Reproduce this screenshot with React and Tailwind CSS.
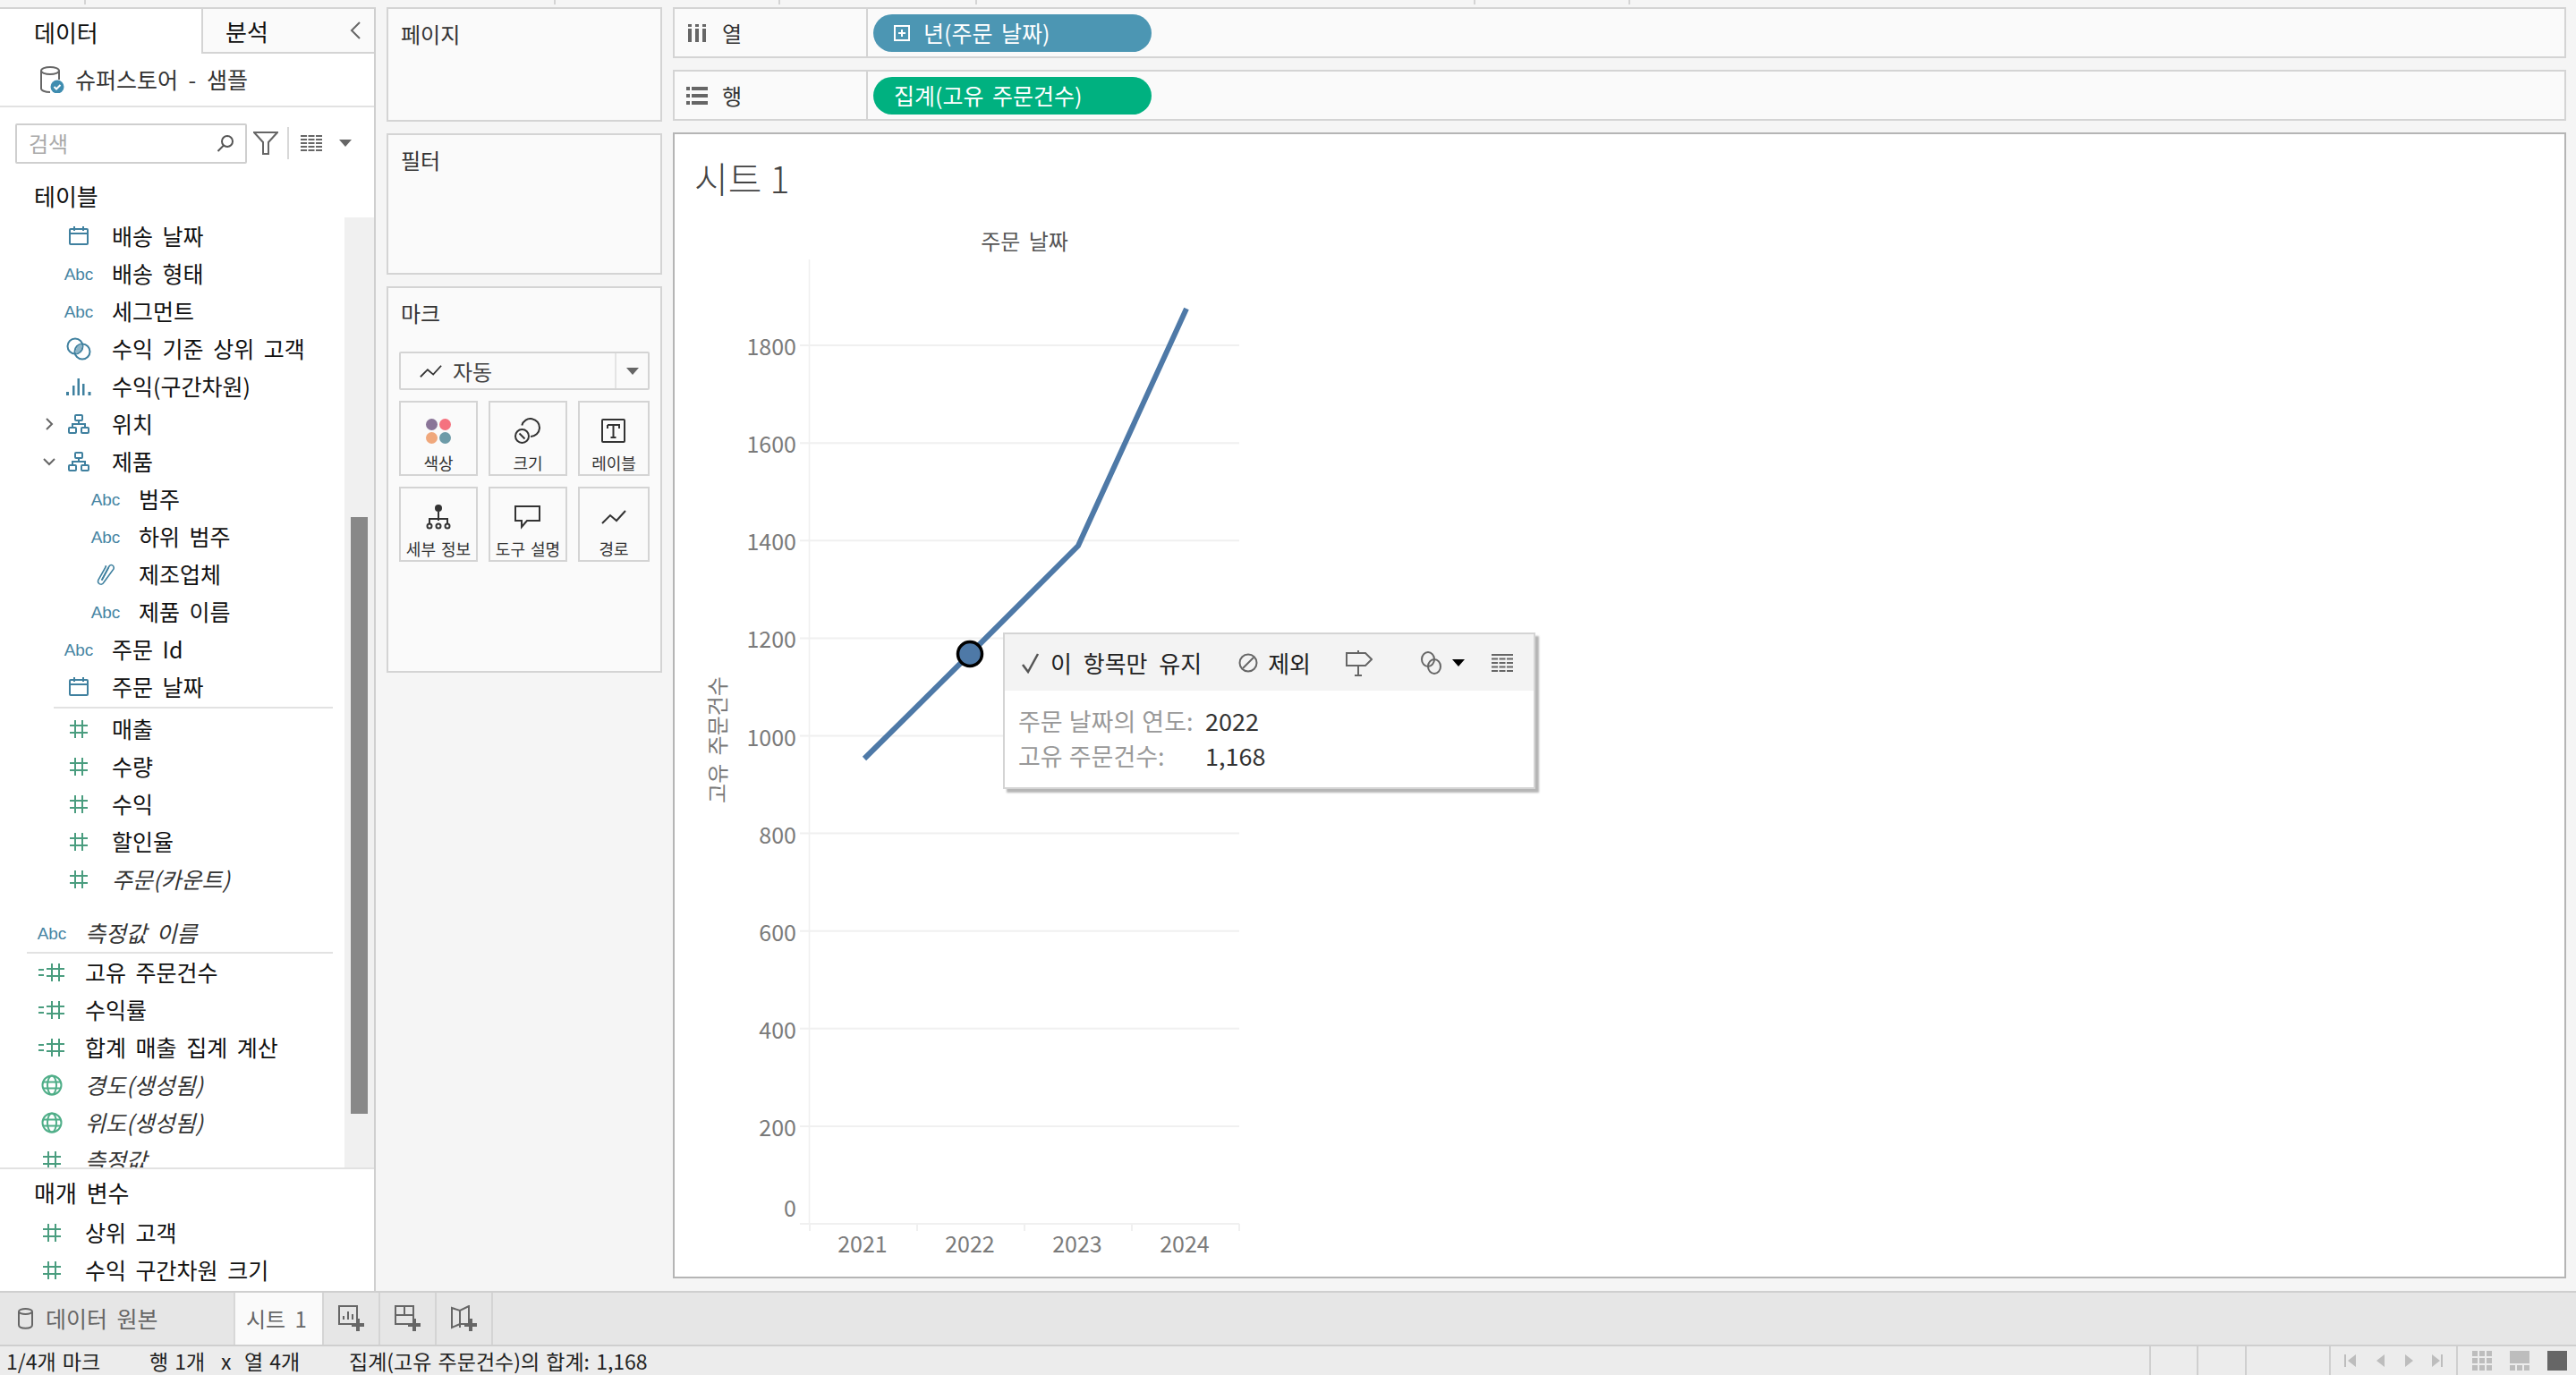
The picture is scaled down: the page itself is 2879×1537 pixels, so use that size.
import React from 'react';

const KR = 'font-["Noto_Sans_CJK_KR","Liberation_Sans",sans-serif]';
const TEAL = '#3f809f';
const GREEN = '#4a9d7f';

const Calendar = () => (
  <svg width="24" height="22" viewBox="0 0 24 22" fill="none" stroke={TEAL} strokeWidth="2">
    <rect x="2" y="3" width="20" height="17" rx="1" />
    <path d="M2 8h20M7 0v5M17 0v5" />
  </svg>
);

const Abc = () => <span className='font-["Liberation_Sans",sans-serif] text-[19px] text-[#4785a3] leading-none'>Abc</span>;

const Rings = () => (
  <svg width="28" height="26" viewBox="0 0 28 26" fill="none" stroke={TEAL} strokeWidth="2">
    <circle cx="10" cy="10" r="8.5" />
    <circle cx="18" cy="16" r="8.5" />
    <path d="M11 18.5a8.5 8.5 0 0 1 6-11a8.5 8.5 0 0 1-6 11z" fill="#8fb6c8" stroke="none" />
  </svg>
);

const Bins = () => (
  <svg width="28" height="20" viewBox="0 0 28 20" fill={TEAL}>
    <rect x="0" y="16" width="3" height="4" />
    <rect x="7" y="9" width="2.5" height="11" />
    <rect x="12.5" y="1" width="2.5" height="19" />
    <rect x="18" y="7" width="2.5" height="13" />
    <rect x="24.5" y="16" width="3" height="4" />
  </svg>
);

const Hierarchy = () => (
  <svg width="24" height="22" viewBox="0 0 24 22" fill="none" stroke={TEAL} strokeWidth="2">
    <rect x="8" y="1" width="8" height="6" rx="1" />
    <rect x="1" y="15" width="8" height="6" rx="1" />
    <rect x="15" y="15" width="8" height="6" rx="1" />
    <path d="M12 7v4M5 15v-4h14v4" />
  </svg>
);

const Clip = () => (
  <svg width="22" height="26" viewBox="0 0 22 26" fill="none" stroke={TEAL} strokeWidth="1.6" strokeLinecap="round">
    <path d="M7 19L15 4c2-3 6-1 5 3L9 22c-2 4-8 2-6-3L11 5c1-2 0-1 0-1M7 19" />
    <path d="M7 19l7-13" />
  </svg>
);

const Hash = ({ calc }) => (
  <svg width={calc ? 30 : 22} height="22" viewBox={calc ? '-8 0 30 22' : '0 0 22 22'} fill="none" stroke={GREEN} strokeWidth="2">
    <path d="M7 1v20M15 1v20M1 7h20M1 15h20" />
    {calc && <path d="M-8 8h6M-8 14h6" />}
  </svg>
);

const Globe = () => (
  <svg width="24" height="24" viewBox="0 0 24 24" fill="none" stroke="#4fae88" strokeWidth="2">
    <circle cx="12" cy="12" r="10.5" />
    <ellipse cx="12" cy="12" rx="5" ry="10.5" />
    <path d="M2 8.500h20M2 15.500h20" />
  </svg>
);

const Caret = ({ className = '', color = '#666' }) => (
  <svg width="14" height="8" viewBox="0 0 14 8" className={className}>
    <path d="M0 0h14L7 8z" fill={color} />
  </svg>
);

const ICONS = {
  cal: <Calendar />,
  abc: <Abc />,
  rings: <Rings />,
  bins: <Bins />,
  tree: <Hierarchy />,
  clip: <Clip />,
  hash: <Hash />,
  calc: <Hash calc />,
  globe: <Globe />,
};

const Row = ({ depth = 1, icon, label, italic, chevron }) => {
  const pad = depth === 0 ? 'pl-[38px]' : depth === 1 ? 'pl-[68px]' : 'pl-[98px]';
  return (
    <div className={`flex items-center h-[42px] shrink-0 ${pad}`}>
      {chevron && (
        <div className="w-[26px] -ml-[26px] flex justify-center">
          <svg width="14" height="14" viewBox="0 0 14 14" fill="none" stroke="#666" strokeWidth="2">
            {chevron === 'right' ? <path d="M4 1l6 6-6 6" /> : <path d="M1 4l6 6 6-6" />}
          </svg>
        </div>
      )}
      <div className="w-[40px] flex justify-center items-center">{ICONS[icon]}</div>
      <span className={`ml-[17px] text-[25px] text-[#111] whitespace-nowrap [word-spacing:5px] ${italic ? 'italic text-[#333]' : ''}`}>{label}</span>
    </div>
  );
};

const tableRows = [
  { icon: 'cal', label: '배송 날짜' },
  { icon: 'abc', label: '배송 형태' },
  { icon: 'abc', label: '세그먼트' },
  { icon: 'rings', label: '수익 기준 상위 고객' },
  { icon: 'bins', label: '수익(구간차원)' },
  { icon: 'tree', label: '위치', chevron: 'right' },
  { icon: 'tree', label: '제품', chevron: 'down' },
  { depth: 2, icon: 'abc', label: '범주' },
  { depth: 2, icon: 'abc', label: '하위 범주' },
  { depth: 2, icon: 'clip', label: '제조업체' },
  { depth: 2, icon: 'abc', label: '제품 이름' },
  { icon: 'abc', label: '주문 Id' },
  { icon: 'cal', label: '주문 날짜' },
];

const measureRows = [
  { icon: 'hash', label: '매출' },
  { icon: 'hash', label: '수량' },
  { icon: 'hash', label: '수익' },
  { icon: 'hash', label: '할인율' },
  { icon: 'hash', label: '주문(카운트)', italic: true },
];

const extraRows = [
  { depth: 0, icon: 'calc', label: '고유 주문건수' },
  { depth: 0, icon: 'calc', label: '수익률' },
  { depth: 0, icon: 'calc', label: '합계 매출 집계 계산' },
  { depth: 0, icon: 'globe', label: '경도(생성됨)', italic: true },
  { depth: 0, icon: 'globe', label: '위도(생성됨)', italic: true },
  { depth: 0, icon: 'hash', label: '측정값', italic: true },
];

const Sidebar = () => (
  <div className="w-[420px] shrink-0 flex flex-col bg-white border-r-2 border-r-[#cfcfcf] border-t-2 border-t-[#d4d4d4]">
    <div className="flex h-[50px] shrink-0">
      <div className="w-[225px] pl-[38px] flex items-center text-[26px] text-[#111]">데이터</div>
      <div className="flex-1 bg-[#fafafa] border-l-2 border-b-2 border-[#d4d4d4] flex items-center justify-between pl-[25px] pr-[15px] text-[26px] text-[#111]">
        <span>분석</span>
        <svg width="12" height="20" viewBox="0 0 12 20" fill="none" stroke="#666" strokeWidth="2">
          <path d="M11 1L2 10l9 9" />
        </svg>
      </div>
    </div>
    <div className="h-[60px] shrink-0 border-b-2 border-[#e2e2e2] flex items-center pl-[44px]">
      <svg width="28" height="30" viewBox="0 0 28 30" fill="none">
        <ellipse cx="12" cy="5" rx="10" ry="4" stroke="#666" strokeWidth="2" />
        <path d="M2 5v20c0 2 4 4 10 4M22 5v10" stroke="#666" strokeWidth="2" />
        <circle cx="20" cy="23" r="7.5" fill="#3f8db0" />
        <path d="M16.500 23l2.500 2.500 4.500-4.500" stroke="#fff" strokeWidth="2" />
      </svg>
      <span className="ml-[12px] text-[25px] text-[#333] [word-spacing:6px]">슈퍼스토어 - 샘플</span>
    </div>
    <div className="flex items-center h-[76px] shrink-0 pt-[4px] pl-[17px]">
      <div className="w-[259px] h-[45px] border-2 border-[#cfcfcf] rounded-[2px] flex items-center justify-between pl-[13px] pr-[12px]">
        <span className="text-[24px] text-[#aaa]">검색</span>
        <svg width="20" height="20" viewBox="0 0 20 20" fill="none" stroke="#555" strokeWidth="2">
          <circle cx="12" cy="8" r="6" />
          <path d="M8 12.500L1.500 19" />
        </svg>
      </div>
      <svg className="ml-[7px]" width="28" height="26" viewBox="0 0 28 26" fill="none" stroke="#666" strokeWidth="2">
        <path d="M1 1h26L17 12v13h-6V12z" />
      </svg>
      <div className="ml-[10px] w-[2px] h-[36px] bg-[#d8d8d8]" />
      <svg className="ml-[13px]" width="24" height="18" viewBox="0 0 24 18" fill="#666">
        <path d="M0 0h7v2H0zM8.500 0h7v2h-7zM17 0h7v2h-7zM0 4h7v2H0zM8.500 4h7v2h-7zM17 4h7v2h-7zM0 8h7v2H0zM8.500 8h7v2h-7zM17 8h7v2h-7zM0 12h7v2H0zM8.500 12h7v2h-7zM17 12h7v2h-7zM0 16h7v2H0zM8.500 16h7v2h-7zM17 16h7v2h-7z" />
      </svg>
      <Caret className="ml-[19px]" />
    </div>
    <div className="h-[44px] mb-[3px] shrink-0 flex items-center pl-[38px] text-[26px] text-[#111]">테이블</div>
    <div className="h-[1062px] shrink-0 flex overflow-hidden">
      <div className="flex-1 flex flex-col min-w-0">
        {tableRows.map((r) => <Row key={r.label} {...r} />)}
        <div className="ml-[60px] w-[312px] h-[2px] shrink-0 bg-[#e2e2e2] mt-[1px]" />
        <div className="h-[2px] shrink-0" />
        {measureRows.map((r) => <Row key={r.label} {...r} />)}
        <div className="mt-[18px]"><Row depth={0} icon="abc" label="측정값 이름" italic /></div>
        <div className="ml-[30px] w-[342px] h-[2px] shrink-0 bg-[#e2e2e2]" />
        {extraRows.map((r) => <Row key={r.label} {...r} />)}
      </div>
      <div className="w-[33px] shrink-0 bg-[#f0f0f0] pl-[7px] pr-[7px] pt-[335px]">
        <div className="h-[667px] bg-[#888]" />
      </div>
    </div>
    <div className="flex-1 border-t-2 border-[#e2e2e2]">
      <div className="h-[50px] flex items-center pl-[38px] text-[26px] text-[#111] [word-spacing:5px]">매개 변수</div>
      <Row depth={0} icon="hash" label="상위 고객" />
      <Row depth={0} icon="hash" label="수익 구간차원 크기" />
    </div>
  </div>
);

const Card = ({ title, className = '', children }) => (
  <div className={`bg-[#fafafa] border-2 border-[#d4d4d4] px-[12px] ${className}`}>
    <div className="text-[24px] text-[#333] pt-[10px] pl-[2px] leading-[36px]">{title}</div>
    {children}
  </div>
);

const MarkButton = ({ label, w, children }) => (
  <div className={`${w} h-[84px] border-2 border-[#d4d4d4] flex flex-col items-center pt-[12px]`}>
    <div className="h-[40px] flex items-center">{children}</div>
    <span className="mt-[4px] text-[18px] leading-[22px] text-[#333] whitespace-nowrap [word-spacing:2px]">{label}</span>
  </div>
);

const PathIcon = ({ w = 28 }) => (
  <svg width={w} height="16" viewBox="0 0 28 16" fill="none" stroke="#333" strokeWidth="2">
    <path d="M1 15l9-9 7 6L27 1" />
  </svg>
);

const MarksCard = () => (
  <Card title="마크" className="h-[432px]">
    <div className="mt-[25px] h-[43px] border-2 border-[#d4d4d4] rounded-[2px] flex items-center">
      <div className="flex-1 flex items-center pl-[21px] border-r-2 border-[#e4e4e4] h-full">
        <PathIcon w={25} />
        <span className="ml-[12px] text-[24px] text-[#444]">자동</span>
      </div>
      <div className="w-[35px] flex justify-center"><Caret /></div>
    </div>
    <div className="mt-[12px] flex gap-[12px]">
      <MarkButton label="색상" w="w-[88px]">
        <div className="grid grid-cols-2 gap-[2px]">
          <div className="w-[13px] h-[13px] rounded-full bg-[#8a7598]" />
          <div className="w-[13px] h-[13px] rounded-full bg-[#f5727f]" />
          <div className="w-[13px] h-[13px] rounded-full bg-[#f0a87c]" />
          <div className="w-[13px] h-[13px] rounded-full bg-[#6d9ba8]" />
        </div>
      </MarkButton>
      <MarkButton label="크기" w="w-[88px]">
        <svg width="30" height="30" viewBox="0 0 30 30" fill="none" stroke="#333" strokeWidth="2">
          <path d="M8.300 8.500A10 10 0 1 1 18 21" />
          <circle cx="8.500" cy="20.500" r="7.500" />
          <path d="M5.500 17.500l6 6" />
        </svg>
      </MarkButton>
      <MarkButton label="레이블" w="w-[80px]">
        <svg width="28" height="28" viewBox="0 0 28 28" fill="none">
          <rect x="1" y="1" width="25" height="25" rx="1" stroke="#333" strokeWidth="2" />
          <path d="M7 7h13v4M7 7v4M13.500 7v14M10.500 21h6" stroke="#333" strokeWidth="2" />
        </svg>
      </MarkButton>
    </div>
    <div className="mt-[12px] flex gap-[12px]">
      <MarkButton label="세부 정보" w="w-[88px]">
        <svg width="28" height="30" viewBox="0 0 28 30" fill="none" stroke="#333" strokeWidth="2">
          <circle cx="14" cy="5" r="4" fill="#333" stroke="none" />
          <path d="M14 9v10M4 22v-5h20v5" />
          <circle cx="4" cy="25" r="2.500" />
          <circle cx="14" cy="25" r="2.500" />
          <circle cx="24" cy="25" r="2.500" />
        </svg>
      </MarkButton>
      <MarkButton label="도구 설명" w="w-[88px]">
        <svg width="30" height="28" viewBox="0 0 30 28" fill="none" stroke="#333" strokeWidth="2">
          <path d="M1 2h27v16H14l-6 7v-7H1z" />
        </svg>
      </MarkButton>
      <MarkButton label="경로" w="w-[80px]"><PathIcon /></MarkButton>
    </div>
  </Card>
);

const Shelf = ({ icon, label, pill, color }) => (
  <div className="h-[57px] shrink-0 bg-[#fafafa] border-2 border-[#d4d4d4] flex">
    <div className="w-[216px] shrink-0 border-r-2 border-[#d4d4d4] flex items-center pl-[12px]">
      <div className="w-[26px] flex justify-center">{icon}</div>
      <span className="ml-[15px] text-[24px] text-[#333]">{label}</span>
    </div>
    <div className="flex items-center pl-[6px]">
      <div className={`w-[311px] h-[42px] rounded-full ${color} flex items-center pl-[23px] text-[25px] text-white whitespace-nowrap [word-spacing:4px]`}>
        {pill}
      </div>
    </div>
  </div>
);

const yTicks = [0, 200, 400, 600, 800, 1000, 1200, 1400, 1600, 1800];
const yOf = (v) => 1368 - v * 0.5455;

const Chart = () => (
  <svg className="block" width="700" height="1170" viewBox="754 240 700 1170">
    <text x="1145" y="279" textAnchor="middle" fontSize="24" fill="#555" style={{ wordSpacing: 4 }}>주문 날짜</text>
    <line x1="904.500" y1="290" x2="904.500" y2="1368" stroke="#f0f0f0" strokeWidth="1.500" />
    {yTicks.map((v) => (
      <g key={v}>
        <line x1="894" y1={yOf(v)} x2="1385" y2={yOf(v)} stroke="#f0f0f0" strokeWidth="2" />
        <text x="890" y={v === 0 ? 1360 : yOf(v) + 11} textAnchor="end" fontSize="25" fill="#7a7a7a">{v}</text>
      </g>
    ))}
    {[905, 1025, 1145, 1265, 1385].map((x) => (
      <line key={x} x1={x} y1="1368" x2={x} y2="1376" stroke="#f0f0f0" strokeWidth="2" />
    ))}
    {[[964, 2021], [1084, 2022], [1204, 2023], [1324, 2024]].map(([x, y]) => (
      <text key={y} x={x} y="1400" textAnchor="middle" fontSize="25" fill="#7a7a7a">{y}</text>
    ))}
    <text transform="translate(811 827) rotate(-90)" textAnchor="middle" fontSize="24" fill="#777" style={{ wordSpacing: 4 }}>고유 주문건수</text>
    <polyline points="966,848 1084,731 1205,610 1326,345" fill="none" stroke="#4e79a7" strokeWidth="6" />
    <circle cx="1084" cy="731" r="13.500" fill="#4e79a7" stroke="#000" strokeWidth="3.500" />
  </svg>
);

const Tooltip = () => (
  <div className="absolute left-[367px] top-[557px] w-[595px] h-[175px] bg-white border-2 border-[#d4d4d4] shadow-[4px_4px_2px_#b5b5b5]">
    <div className="h-[63px] bg-[#f3f3f3] flex items-center pl-[19px] text-[26px] text-[#222] whitespace-nowrap">
      <svg width="20" height="24" viewBox="0 0 20 24" fill="none" stroke="#555" strokeWidth="2.500"><path d="M1 14l6 8L18 2" /></svg>
      <span className="ml-[12px] [word-spacing:7px]">이 항목만 유지</span>
      <svg className="ml-[41px]" width="22" height="22" viewBox="0 0 22 22" fill="none" stroke="#666" strokeWidth="2">
        <circle cx="11" cy="11" r="9.500" />
        <path d="M5 17L17 5" />
      </svg>
      <span className="ml-[11px]">제외</span>
      <svg className="ml-[39px]" width="30" height="30" viewBox="0 0 30 30" fill="none" stroke="#666" strokeWidth="2">
        <path d="M1 4h21l7 7-7 7H1zM14 18v11M10 29h8M14 1v3" />
      </svg>
      <svg className="ml-[54px]" width="24" height="28" viewBox="0 0 24 28" fill="none" stroke="#666" strokeWidth="2">
        <ellipse cx="8" cy="10" rx="7" ry="8" />
        <ellipse cx="15" cy="18" rx="7" ry="8" />
      </svg>
      <Caret className="ml-[11px]" color="#000" />
      <svg className="ml-[30px]" width="24" height="20" viewBox="0 0 24 20" fill="#666">
        <path d="M0 0h24v2H0zM0 4.500h7v2H0zM8.500 4.500h7v2h-7zM17 4.500h7v2h-7zM0 9h7v2H0zM8.500 9h7v2h-7zM17 9h7v2h-7zM0 13.500h7v2H0zM8.500 13.500h7v2h-7zM17 13.500h7v2h-7zM0 18h7v2H0zM8.500 18h7v2h-7zM17 18h7v2h-7z" />
      </svg>
    </div>
    <div className="pl-[15px] pt-[14px] text-[27px] leading-[39px] whitespace-nowrap">
      <div className="flex">
        <span className="w-[209px] text-[#999] [word-spacing:1px]">주문 날짜의 연도:</span>
        <span className="text-[#333]">2022</span>
      </div>
      <div className="flex">
        <span className="w-[209px] text-[#999] [word-spacing:1px]">고유 주문건수:</span>
        <span className="text-[#333]">1,168</span>
      </div>
    </div>
  </div>
);

const TabBar = () => (
  <div className="h-[60px] shrink-0 bg-[#e6e6e6] border-t-2 border-[#cfcfcf] flex items-stretch">
    <div className="w-[261px] flex items-center pl-[20px]">
      <svg width="17" height="24" viewBox="0 0 17 24" fill="none" stroke="#666" strokeWidth="2">
        <ellipse cx="8.500" cy="4" rx="7.500" ry="3" />
        <path d="M1 4v15c0 5 15 5 15 0V4" />
      </svg>
      <span className="ml-[14px] text-[25px] text-[#666] [word-spacing:5px]">데이터 원본</span>
    </div>
    <div className="w-[99px] bg-[#fafafa] border-l-2 border-[#d8d8d8] flex items-center pl-[12px] text-[24px] text-[#666] [word-spacing:5px]">시트 1</div>
    {[
      <><path d="M1 1h20v20H1z" /><path d="M6 16v-4M11 16V7M16 16v-6" /></>,
      <><path d="M1 1h20v20H1zM11 1v10M1 11h20" /></>,
      <><path d="M1 3l9 3 10-5v20l-10 0-9 4zM10 6v19" /></>,
    ].map((shape, i) => (
      <div key={i} className="w-[63px] border-l-2 border-[#d4d4d4] flex items-center justify-center">
        <svg width="30" height="30" viewBox="0 0 30 30" fill="none" stroke="#666" strokeWidth="2">
          {shape}
          <path d="M15 22h14M22 15v14" strokeWidth="4" />
        </svg>
      </div>
    ))}
    <div className="border-l-2 border-[#d4d4d4]" />
  </div>
);

const StatusBar = () => (
  <div className="h-[34px] shrink-0 bg-[#ececec] border-t-2 border-[#cfcfcf] flex items-center text-[23px] text-[#222] whitespace-nowrap [word-spacing:2px]">
    <span className="ml-[7px] w-[160px]">1/4개 마크</span>
    <span className="w-[80px]">행 1개</span>
    <span className="w-[26px]">x</span>
    <span className="w-[117px]">열 4개</span>
    <span className="w-[2012px]">집계(고유 주문건수)의 합계: 1,168</span>
    <div className="w-[2px] h-full bg-[#cfcfcf]" />
    <div className="w-[51px]" />
    <div className="w-[2px] h-full bg-[#cfcfcf]" />
    <div className="w-[52px]" />
    <div className="w-[2px] h-full bg-[#cfcfcf]" />
    <div className="w-[92px]" />
    <div className="w-[2px] h-full bg-[#cfcfcf]" />
    <div className="w-[140px] flex items-center justify-center">
      <svg width="110" height="16" viewBox="0 0 110 16" fill="#bdbdbd">
        <path d="M0 1h2v14H0zM13 1v14L4 8zM45 1v14l-9-7zM68 1l9 7-9 7zM98 1l9 7-9 7zM108 1h2v14h-2z" />
      </svg>
    </div>
    <div className="w-[2px] h-full bg-[#cfcfcf]" />
    <div className="ml-[16px] flex items-center gap-[20px]">
      <div className="grid grid-cols-3 gap-[2px] w-[22px] h-[22px]">
        {Array.from({ length: 9 }).map((_, i) => <div key={i} className="bg-[#bdbdbd]" />)}
      </div>
      <div className="w-[22px] h-[22px] flex flex-col gap-[2px]">
        <div className="flex-1 bg-[#bdbdbd]" />
        <div className="h-[6px] flex gap-[2px]">
          <div className="flex-1 bg-[#bdbdbd]" />
          <div className="flex-1 bg-[#bdbdbd]" />
          <div className="flex-1 bg-[#bdbdbd]" />
        </div>
      </div>
      <div className="w-[22px] h-[22px] bg-[#666]" />
    </div>
  </div>
);

export default function App() {
  return (
    <div className={`w-[2879px] h-[1537px] flex flex-col overflow-hidden bg-[#f5f5f5] ${KR}`}>
      <div className="h-[8px] shrink-0 flex items-start">
        <div className="ml-[94px] w-[2px] h-[5px] bg-[#d4d4d4]" />
        <div className="ml-[523px] w-[2px] h-[5px] bg-[#d4d4d4]" />
        <div className="ml-[249px] w-[2px] h-[5px] bg-[#d4d4d4]" />
        <div className="ml-[218px] w-[2px] h-[5px] bg-[#d4d4d4]" />
        <div className="ml-[555px] w-[2px] h-[5px] bg-[#d4d4d4]" />
        <div className="ml-[171px] w-[2px] h-[5px] bg-[#d4d4d4]" />
      </div>
      <div className="flex-1 flex min-h-0">
        <Sidebar />
        <div className="w-[308px] ml-[12px] shrink-0 flex flex-col gap-[13px]">
          <Card title="페이지" className="h-[128px]" />
          <Card title="필터" className="h-[158px]" />
          <MarksCard />
        </div>
        <div className="flex-1 ml-[12px] mr-[11px] flex flex-col pb-[14px] gap-[13px] min-w-0">
          <Shelf
            label="열"
            color="bg-[#4c96b3]"
            icon={
              <svg width="20" height="20" viewBox="0 0 20 20" fill="#666">
                <path d="M0 0h4v3H0zM8 0h4v3H8zM16 0h4v3h-4zM0 5h4v15H0zM8 5h4v15H8zM16 5h4v15h-4z" />
              </svg>
            }
            pill={
              <>
                <svg width="18" height="18" viewBox="0 0 18 18" fill="none" stroke="#fff" strokeWidth="2">
                  <rect x="1" y="1" width="16" height="16" />
                  <path d="M9 5v8M5 9h8" />
                </svg>
                <span className="ml-[15px]">년(주문 날짜)</span>
              </>
            }
          />
          <Shelf
            label="행"
            color="bg-[#00b180]"
            icon={
              <svg width="24" height="20" viewBox="0 0 24 20" fill="#666">
                <path d="M0 0h4v4H0zM6 0h18v4H6zM0 8h4v4H0zM6 8h18v4H6zM0 16h4v4H0zM6 16h18v4H6z" />
              </svg>
            }
            pill="집계(고유 주문건수)"
          />
          <div className="relative flex-1 bg-white border-2 border-[#b5b5b5] min-h-0">
            <div className="h-[90px] pl-[22px] pt-[21px] text-[41px] leading-[54px] font-light text-[#444]">시트 1</div>
            <Chart />
            <Tooltip />
          </div>
        </div>
      </div>
      <TabBar />
      <StatusBar />
    </div>
  );
}
